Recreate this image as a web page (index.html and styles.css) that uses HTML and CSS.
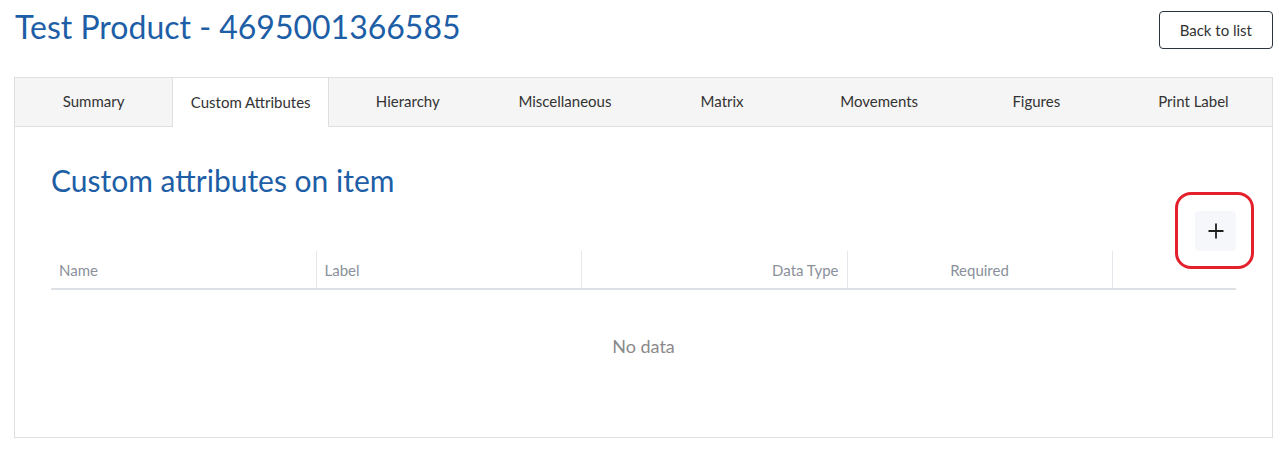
FILE: index.html
```html
<!DOCTYPE html>
<html lang="en">
<head>
  <meta charset="UTF-8">
  <title>Test Product - 4695001366585</title>
  <link rel="stylesheet" href="styles.css">
</head>
<body>
  <div class="page">
    <header class="page-head">
      <h1>Test Product - 4695001366585</h1>
      <button class="back-btn">Back to list</button>
    </header>

    <div class="tabs">
      <nav class="tab-bar">
        <a class="tab">Summary</a>
        <a class="tab active">Custom Attributes</a>
        <a class="tab">Hierarchy</a>
        <a class="tab">Miscellaneous</a>
        <a class="tab">Matrix</a>
        <a class="tab">Movements</a>
        <a class="tab">Figures</a>
        <a class="tab">Print Label</a>
      </nav>

      <section class="tab-body">
        <h2>Custom attributes on item</h2>

        <div class="toolbar">
          <button class="add-btn" title="Add">
            <svg width="16" height="16" viewBox="0 0 16 16"><path d="M8 0.5v15M0.5 8h15" stroke="#1e1e1e" stroke-width="1.8" fill="none"/></svg>
            <span class="highlight"></span>
          </button>
        </div>

        <table class="grid">
          <colgroup>
            <col class="c1"><col class="c2"><col class="c3"><col class="c4"><col>
          </colgroup>
          <thead>
            <tr>
              <th>Name</th>
              <th>Label</th>
              <th class="right">Data Type</th>
              <th class="center">Required</th>
              <th></th>
            </tr>
          </thead>
          <tbody>
            <tr><td colspan="5" class="empty">No data</td></tr>
          </tbody>
        </table>
      </section>
    </div>
  </div>
</body>
</html>
```

FILE: styles.css
```css
body {
  margin: 0;
  font-family: Lato, "Open Sans", sans-serif;
  color: #333;
  background: #fff;
}

.page {
  padding: 0 12px 0 14px;
}

.page-head {
  display: flex;
  justify-content: space-between;
  align-items: flex-start;
  height: 77px;
}

.page-head h1 {
  margin: 7px 0 0 1px;
  font-size: 32px;
  line-height: 40px;
  font-weight: 400;
  color: #1d5ea6;
}

.back-btn {
  margin-top: 11px;
  height: 38px;
  padding: 0 20px 1px;
  border: 1px solid #2c3440;
  border-radius: 4px;
  background: #fff;
  font-family: inherit;
  font-size: 15px;
  color: #333;
}

.tabs {
  border: 1px solid #dfdfdf;
}

.tab-bar {
  display: grid;
  grid-template-columns: repeat(8, 1fr);
  background: #f5f5f5;
  border-bottom: 1px solid #dfdfdf;
  height: 48px;
}

.tab {
  display: flex;
  align-items: center;
  justify-content: center;
  padding-bottom: 2px;
  font-size: 15px;
  color: #333;
}

.tab.active {
  background: #fff;
  border-left: 1px solid #dfdfdf;
  border-right: 1px solid #dfdfdf;
  margin-bottom: -1px;
}

.tab-body {
  padding: 35px 36px 35px 36px;
}

.tab-body h2 {
  margin: 0;
  font-size: 30px;
  line-height: 36px;
  font-weight: 400;
  color: #1d5ea6;
}

.toolbar {
  display: flex;
  justify-content: flex-end;
  margin-top: 13px;
}

.add-btn {
  position: relative;
  display: flex;
  align-items: center;
  justify-content: center;
  width: 41px;
  height: 40px;
  padding: 0;
  border: none;
  border-radius: 4px;
  background: #f5f7fa;
}

/* red annotation ring drawn over the add button */
.highlight {
  position: absolute;
  top: -19px;
  right: -18px;
  bottom: -18px;
  left: -20px;
  border: 3px solid #e3202c;
  border-radius: 16px;
  pointer-events: none;
}

.grid {
  width: 100%;
  border-collapse: collapse;
  table-layout: fixed;
}

.grid col.c1,
.grid col.c2,
.grid col.c4 {
  width: 265px;
}

.grid col.c3 {
  width: 266px;
}

.grid th {
  height: 37px;
  padding: 0 8px;
  font-size: 15px;
  font-weight: 400;
  color: #8a919b;
  text-align: left;
  border-left: 1px solid #e3e6ea;
  border-bottom: 2px solid #dde1e6;
}

.grid th:first-child {
  border-left: none;
}

.grid th.right {
  text-align: right;
}

.grid th.center {
  text-align: center;
}

.grid td.empty {
  height: 112px;
  padding: 0;
  text-align: center;
  font-size: 18px;
  color: #8a8a8a;
}
```
